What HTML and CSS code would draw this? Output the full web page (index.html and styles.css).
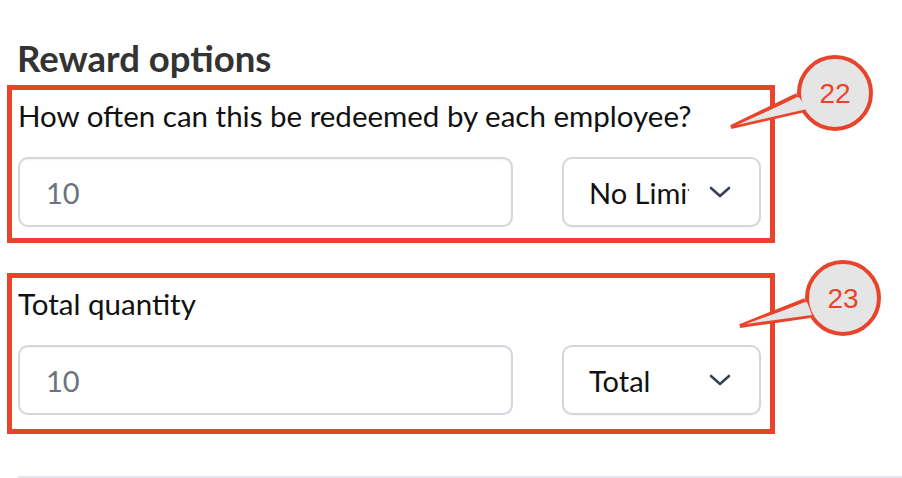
FILE: index.html
```html
<!DOCTYPE html>
<html lang="en">
<head>
  <meta charset="UTF-8">
  <meta name="viewport" content="width=device-width, initial-scale=1.0">
  <title>Reward options</title>
  <link rel="stylesheet" href="styles.css">
</head>
<body>
  <div class="page">
    <h2 class="title">Reward options</h2>

    <div class="annot">
      <label class="fieldLabel">How often can this be redeemed by each employee?</label>
      <div class="row">
        <input class="textInput" type="text" placeholder="10">
        <div class="dropdown">
          <span class="dropText">No Limit</span>
          <svg class="chevron" width="22" height="12" viewBox="0 0 22 12"><path d="M2 2 L11 10 L20 2" fill="none" stroke="#374151" stroke-width="2.6" stroke-linecap="round" stroke-linejoin="round"/></svg>
        </div>
      </div>
      <svg class="callout one" width="160" height="90" viewBox="0 0 160 90">
        <path d="M68 41 L2 73 L76 56" fill="#e5e5e5" stroke="#e8442b" stroke-width="4" stroke-linejoin="miter"/>
        <circle cx="106" cy="39" r="36" fill="#e5e5e5" stroke="#e8442b" stroke-width="4"/>
        <path d="M70 43 L8 71 L78 55 Z" fill="#e5e5e5"/>
        <text x="106" y="49" text-anchor="middle" class="calloutText">22</text>
      </svg>
    </div>

    <div class="annot second">
      <label class="fieldLabel">Total quantity</label>
      <div class="row">
        <input class="textInput" type="text" placeholder="10">
        <div class="dropdown">
          <span class="dropText">Total</span>
          <svg class="chevron" width="22" height="12" viewBox="0 0 22 12"><path d="M2 2 L11 10 L20 2" fill="none" stroke="#374151" stroke-width="2.6" stroke-linecap="round" stroke-linejoin="round"/></svg>
        </div>
      </div>
      <svg class="callout two" width="160" height="90" viewBox="0 0 160 90">
        <path d="M67 41 L2 67 L72 57" fill="#e5e5e5" stroke="#e8442b" stroke-width="4" stroke-linejoin="miter"/>
        <circle cx="105" cy="39" r="36" fill="#e5e5e5" stroke="#e8442b" stroke-width="4"/>
        <path d="M69 43 L8 65 L74 56 Z" fill="#e5e5e5"/>
        <text x="105" y="49" text-anchor="middle" class="calloutText">23</text>
      </svg>
    </div>

    <hr class="divider">
  </div>
</body>
</html>
```

FILE: styles.css
```css
body{
  margin: 0;
  background: #fff;
  font-family: 'Lato', sans-serif;
  overflow: hidden;
}

.page{
  padding: 37px 0 0 7px;
}

.title{
  margin: 0 0 5px 10px;
  font-size: 36.5px;
  font-weight: 700;
  color: #333333;
  line-height: 43px;
}

.annot{
  position: relative;
  width: 743px;
  border: 5px solid #e8442b;
  padding: 9px 9px 11px 6px;
}

.second{
  margin-top: 30px;
  padding-bottom: 14px;
}

.fieldLabel{
  display: block;
  font-size: 29.5px;
  color: #111;
  line-height: 34px;
}

.row{
  display: flex;
  justify-content: space-between;
  margin-top: 24px;
}

.textInput{
  box-sizing: border-box;
  width: 495px;
  height: 70px;
  border: 2px solid #d3d6db;
  border-radius: 10px;
  padding: 0 26px;
  font-family: 'Lato', sans-serif;
  font-size: 29px;
  color: #111;
  box-shadow: inset 0 1px 2px rgba(0,0,0,0.05);
  outline: none;
}

.textInput::placeholder{
  color: #6b7280;
}

.dropdown{
  box-sizing: border-box;
  width: 199px;
  height: 70px;
  border: 2px solid #d3d6db;
  border-radius: 10px;
  display: flex;
  align-items: center;
  padding: 0 28px 0 25px;
  box-shadow: 0 1px 2px rgba(0,0,0,0.04);
}

.dropText{
  width: 100px;
  overflow: hidden;
  white-space: nowrap;
  font-size: 29px;
  color: #111;
}

.chevron{
  margin-left: auto;
}

.callout{
  position: absolute;
  top: -36px;
  left: 717px;
  overflow: visible;
}

.callout.two{
  top: -19px;
  left: 726px;
}

.calloutText{
  font-family: 'Liberation Sans', sans-serif;
  font-size: 28px;
  fill: #e8442b;
}

.divider{
  margin: 42px 0 0 11px;
  border: none;
  border-top: 3px solid #e5e5ea;
}
```
